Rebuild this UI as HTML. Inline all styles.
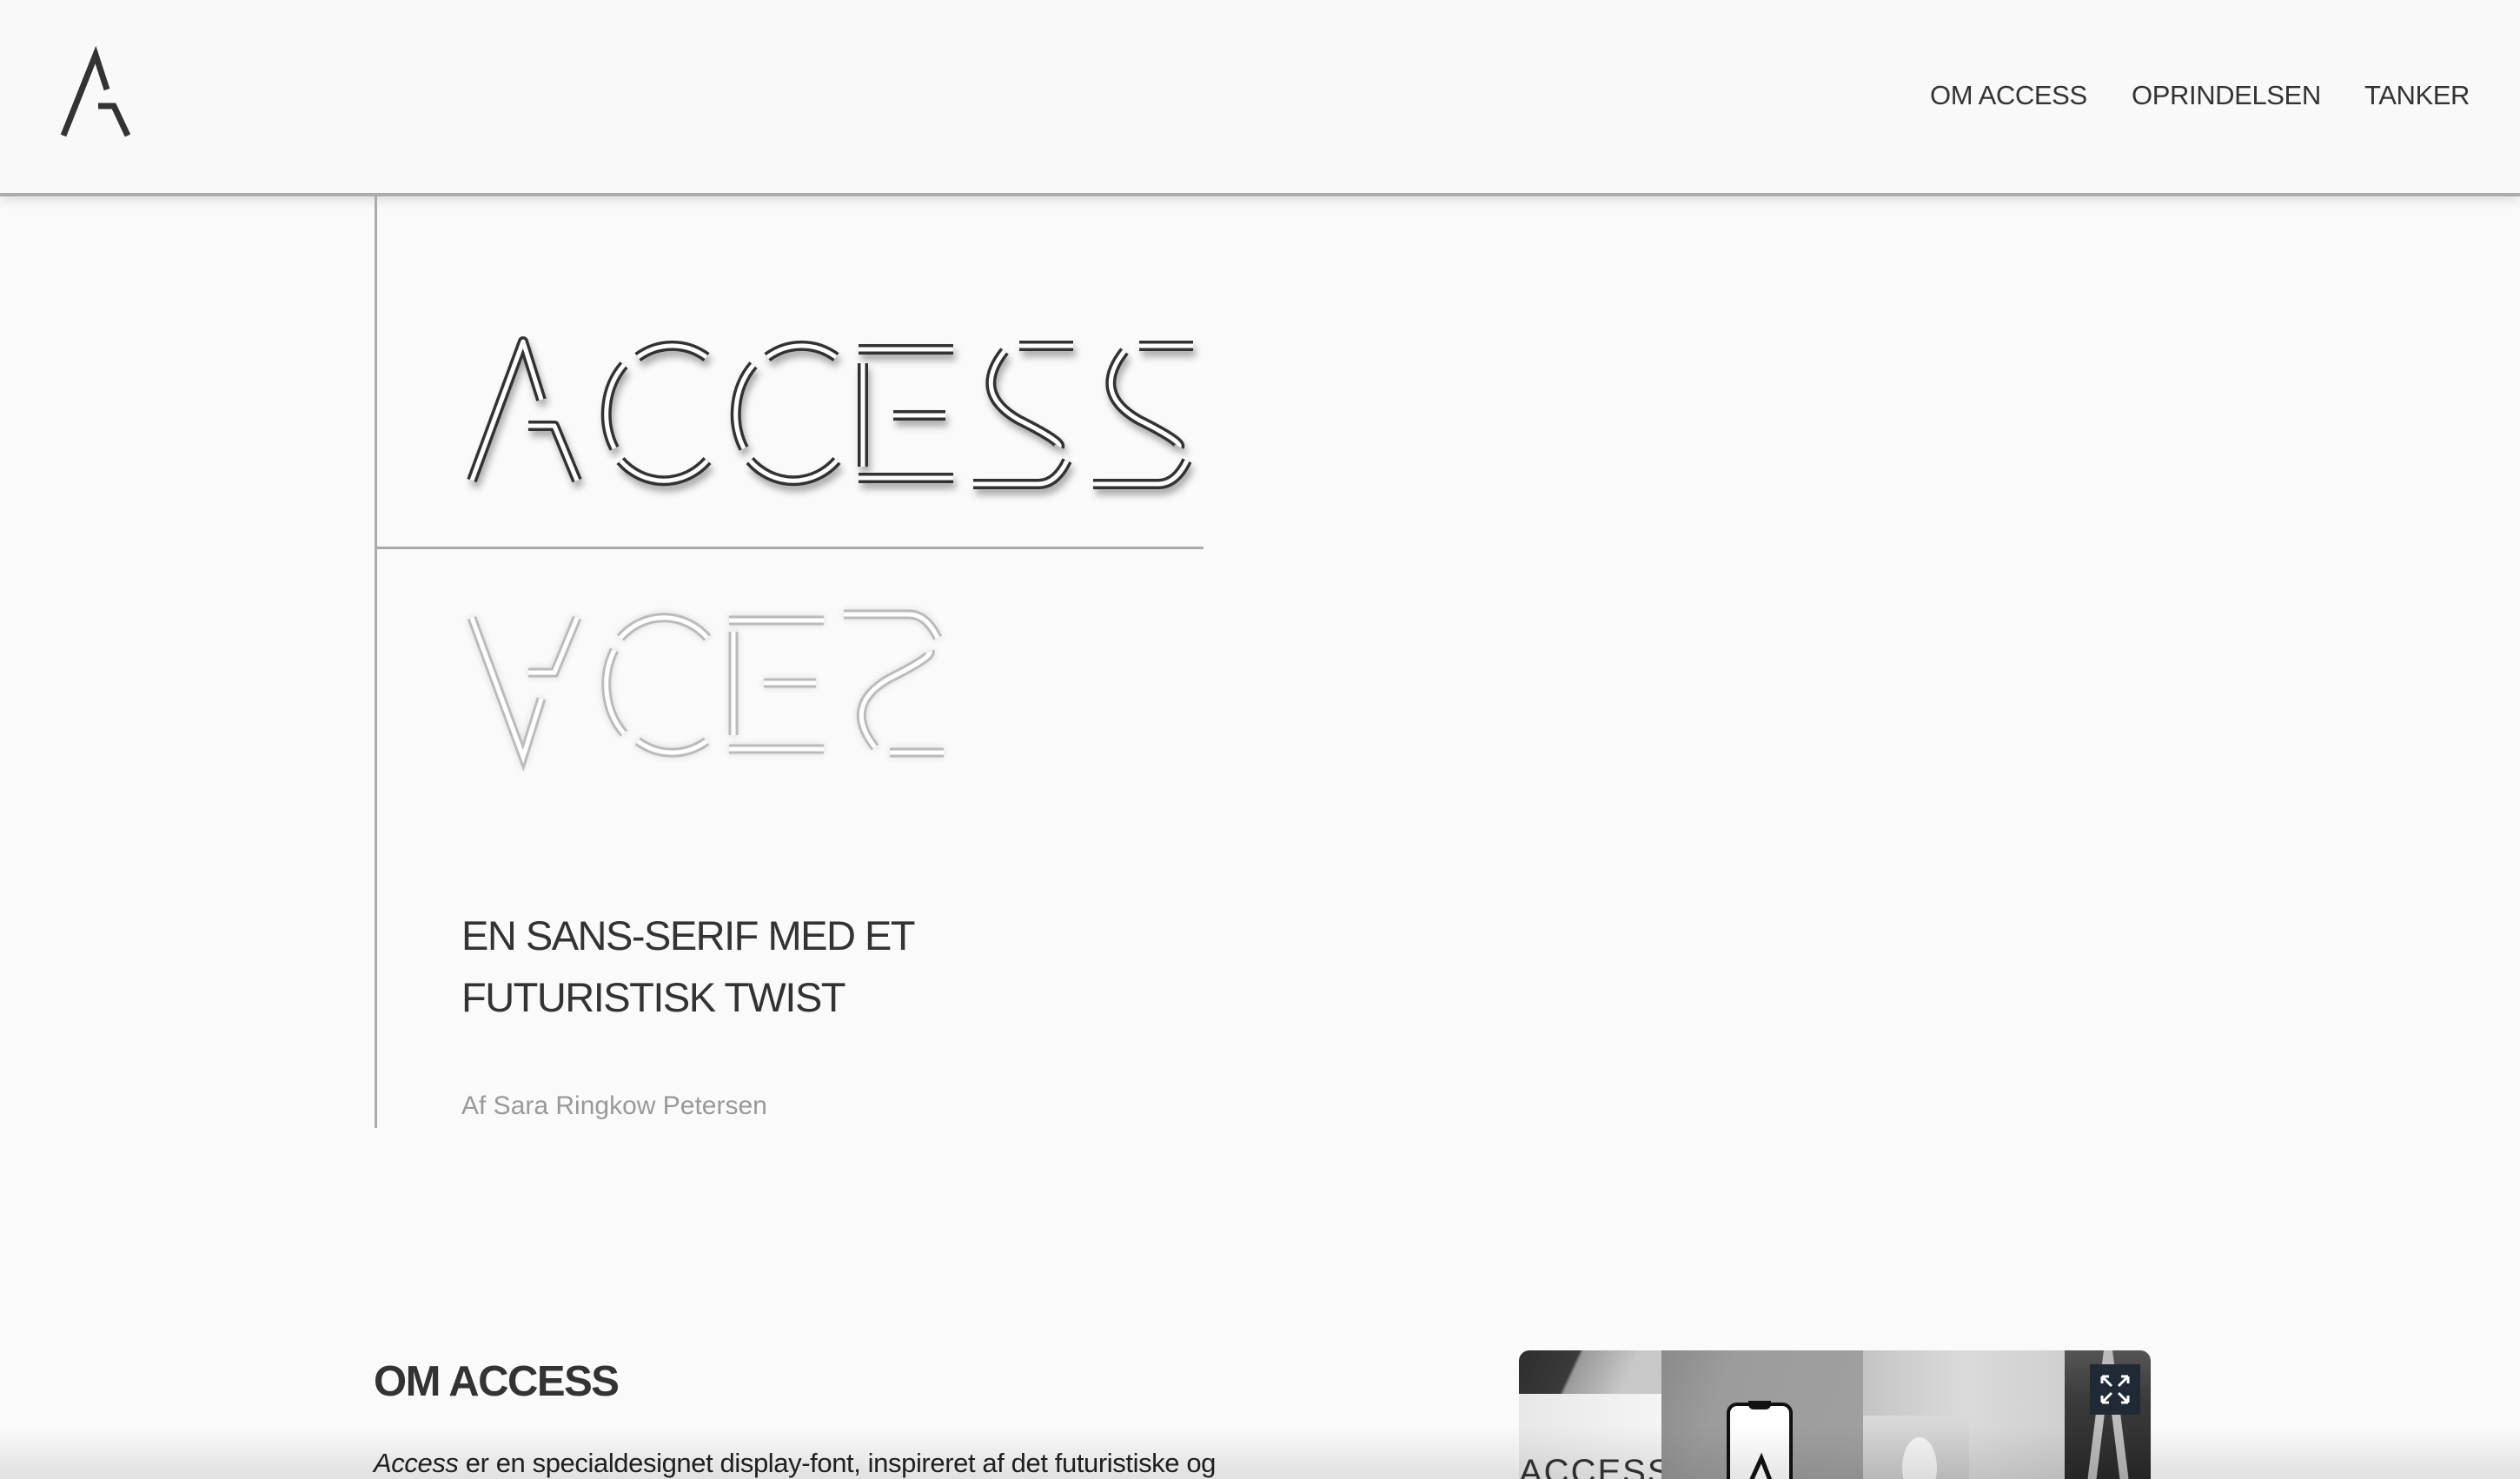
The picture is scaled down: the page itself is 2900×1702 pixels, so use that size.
<!DOCTYPE html>
<html><head><meta charset="utf-8"><style>
html,body{margin:0;padding:0;overflow:hidden;width:2900px;height:1702px}
body{background:#fafafa;font-family:"Liberation Sans",Arial,sans-serif;color:#333;position:relative}
.hdr{position:absolute;left:0;top:0;width:2900px;height:222px;background:#f9f9f9;border-bottom:4px solid #acacac;box-shadow:0 4px 12px rgba(0,0,0,.12)}
.nav{position:absolute;top:92px;font-size:31px;color:#333;letter-spacing:-0.4px;white-space:nowrap}
.vline{position:absolute;left:431px;top:226px;width:3px;height:1072px;background:#aaa}
.hline{position:absolute;left:432px;top:629px;width:953px;height:3px;background:#aaa}
.t{position:absolute;left:531px;font-size:47px;letter-spacing:-1.5px;color:#333;white-space:nowrap}
.by{position:absolute;left:531px;top:1256px;font-size:30px;color:#999;letter-spacing:0px}
h2{position:absolute;left:430px;top:1562px;margin:0;font-size:49px;font-weight:bold;letter-spacing:-1.5px;color:#333}
p{position:absolute;left:430px;top:1666px;margin:0;font-size:31px;letter-spacing:-0.4px;white-space:nowrap;color:#222}
.gal{position:absolute;left:1748px;top:1554px;width:727px;height:148px;border-radius:12px 12px 0 0;overflow:hidden;display:flex}
.bshade{position:absolute;left:0;top:1640px;width:2900px;height:62px;background:linear-gradient(to bottom,rgba(0,0,0,0),rgba(0,0,0,.10));pointer-events:none}
</style></head><body>
<div class="hdr">
<svg width="200" height="222" style="position:absolute;left:0;top:0">
<path d="M73,156 L110,63 L123,103" fill="none" stroke="#333" stroke-width="7" stroke-linejoin="miter"/>
<path d="M113,122 L131,122 L147,156" fill="none" stroke="#333" stroke-width="7"/>
</svg>
<div class="nav" style="left:2221px">OM ACCESS</div>
<div class="nav" style="left:2453px">OPRINDELSEN</div>
<div class="nav" style="left:2721px">TANKER</div>
</div>
<div class="vline"></div>
<div class="hline"></div>

<svg width="2900" height="1000" style="position:absolute;left:0;top:0" aria-label="ACCESS">
<defs>
<filter id="sh" x="-10%" y="-10%" width="120%" height="130%"><feDropShadow dx="3" dy="7" stdDeviation="4" flood-color="#000" flood-opacity="0.3"/></filter>
<filter id="sh2" x="-10%" y="-10%" width="120%" height="130%"><feDropShadow dx="0" dy="0" stdDeviation="4" flood-color="#000" flood-opacity="0.12"/></filter>
</defs>
<g filter="url(#sh)" fill="none" stroke-linejoin="round">
<g stroke="#333" stroke-width="12">
<path d="M543,553 L602,393 L623,460"/>
<path d="M608,490 L638,490 L664,553"/>
<path d="M734,411 A72,80 0 0 1 813,411"/><path d="M718,420 A70,80 0 0 0 707,516"/><path d="M714,530 A68,72 0 0 0 814,530"/>
<path d="M883,411 A72,80 0 0 1 962,411"/><path d="M867,420 A70,80 0 0 0 856,516"/><path d="M863,530 A68,72 0 0 0 963,530"/>
<path d="M993,418 L993,537"/><path d="M988,402 L1097,402"/><path d="M1028,478 L1088,478"/><path d="M988,550 L1097,550"/>
<path d="M1173,398 L1235,398"/><path d="M1156,404 Q1118,452 1172,483 Q1222,508 1219,514"/><path d="M1228,530 Q1215,557 1195,557 L1120,557"/>
<path d="M1311,398 L1373,398"/><path d="M1294,404 Q1256,452 1310,483 Q1360,508 1357,514"/><path d="M1366,530 Q1353,557 1333,557 L1258,557"/>
</g>
<g stroke="#fff" stroke-width="5">
<path d="M543,553 L602,393 L623,460"/>
<path d="M608,490 L638,490 L664,553"/>
<path d="M734,411 A72,80 0 0 1 813,411"/><path d="M718,420 A70,80 0 0 0 707,516"/><path d="M714,530 A68,72 0 0 0 814,530"/>
<path d="M883,411 A72,80 0 0 1 962,411"/><path d="M867,420 A70,80 0 0 0 856,516"/><path d="M863,530 A68,72 0 0 0 963,530"/>
<path d="M993,418 L993,537"/><path d="M988,402 L1097,402"/><path d="M1028,478 L1088,478"/><path d="M988,550 L1097,550"/>
<path d="M1173,398 L1235,398"/><path d="M1156,404 Q1118,452 1172,483 Q1222,508 1219,514"/><path d="M1228,530 Q1215,557 1195,557 L1120,557"/>
<path d="M1311,398 L1373,398"/><path d="M1294,404 Q1256,452 1310,483 Q1360,508 1357,514"/><path d="M1366,530 Q1353,557 1333,557 L1258,557"/>
</g>
</g>
<g filter="url(#sh2)" fill="none" transform="translate(0,1264) scale(1,-1)">
<g stroke="#bbb" stroke-width="11">
<path d="M543,553 L602,393 L623,460"/>
<path d="M608,490 L638,490 L664,553"/>
<path d="M734,411 A72,80 0 0 1 813,411"/><path d="M718,420 A70,80 0 0 0 707,516"/><path d="M714,530 A68,72 0 0 0 814,530"/>
<path d="M844,418 L844,537"/><path d="M839,402 L948,402"/><path d="M879,478 L939,478"/><path d="M839,550 L948,550"/>
<path d="M1024,398 L1086,398"/><path d="M1007,404 Q969,452 1023,483 Q1073,508 1070,514"/><path d="M1079,530 Q1066,557 1046,557 L971,557"/>
</g>
<g stroke="#fff" stroke-width="5">
<path d="M543,553 L602,393 L623,460"/>
<path d="M608,490 L638,490 L664,553"/>
<path d="M734,411 A72,80 0 0 1 813,411"/><path d="M718,420 A70,80 0 0 0 707,516"/><path d="M714,530 A68,72 0 0 0 814,530"/>
<path d="M844,418 L844,537"/><path d="M839,402 L948,402"/><path d="M879,478 L939,478"/><path d="M839,550 L948,550"/>
<path d="M1024,398 L1086,398"/><path d="M1007,404 Q969,452 1023,483 Q1073,508 1070,514"/><path d="M1079,530 Q1066,557 1046,557 L971,557"/>
</g>
</g>
</svg>

<div class="t" style="top:1049px">EN SANS-SERIF MED ET</div>
<div class="t" style="top:1120px">FUTURISTISK TWIST</div>
<div class="by">Af Sara Ringkow Petersen</div>

<h2>OM ACCESS</h2>
<p><i>Access</i> er en specialdesignet display-font, inspireret af det futuristiske og</p>

<div class="gal">
<div style="width:164px;position:relative;background:linear-gradient(115deg,#2e2e2e 0,#3a3a3a 30%,#9a9a9a 32%,#c8c8c8 60%);">
<div style="position:absolute;left:0;top:50px;width:164px;height:110px;background:linear-gradient(90deg,#e8e8e8,#f4f4f4)"></div>
<div style="position:absolute;left:0;top:118px;font-size:40px;color:#333;letter-spacing:2px">ACCESS</div>
</div>
<div style="width:232px;position:relative;background:linear-gradient(110deg,#8a8a8a,#9c9c9c 30%,#a0a0a0)">
<div style="position:absolute;left:75px;top:60px;width:76px;height:120px;border-radius:12px;background:#fff;border:4px solid #111;box-sizing:border-box"></div>
<div style="position:absolute;left:100px;top:58px;width:26px;height:10px;border-radius:0 0 6px 6px;background:#111"></div>
<svg style="position:absolute;left:90px;top:112px" width="50" height="50"><path d="M10,45 L25,12 L38,45" fill="none" stroke="#111" stroke-width="5"/></svg>
</div>
<div style="width:232px;position:relative;background:linear-gradient(90deg,#c4c4c4,#dadada 50%,#d0d0d0)">
<div style="position:absolute;left:0;top:75px;width:122px;height:100px;border-radius:0 10px 0 0;background:linear-gradient(180deg,#d8d8d8,#c8c8c8)"></div>
<div style="position:absolute;left:45px;top:100px;width:40px;height:70px;border-radius:50%;background:#f5f5f5"></div>
</div>
<div style="width:99px;position:relative;background:linear-gradient(180deg,#555 0,#3a3a3a 40%,#2a2a2a)">
<svg style="position:absolute;left:0;top:0" width="99" height="160"><path d="M30,160 L50,0 L70,160" fill="none" stroke="#bbb" stroke-width="10"/></svg>
<div style="position:absolute;left:29px;top:16px;width:58px;height:58px;background:#1f2a36"></div>
<svg style="position:absolute;left:29px;top:16px" width="58" height="58" fill="none" stroke="#fff" stroke-width="3">
<path d="M14,14 L25,25 M14,14 L14,22 M14,14 L22,14"/>
<path d="M44,14 L33,25 M44,14 L44,22 M44,14 L36,14"/>
<path d="M14,44 L25,33 M14,44 L14,36 M14,44 L22,44"/>
<path d="M44,44 L33,33 M44,44 L44,36 M44,44 L36,44"/>
</svg>
</div>
</div>
<div class="bshade"></div>
</body></html>
